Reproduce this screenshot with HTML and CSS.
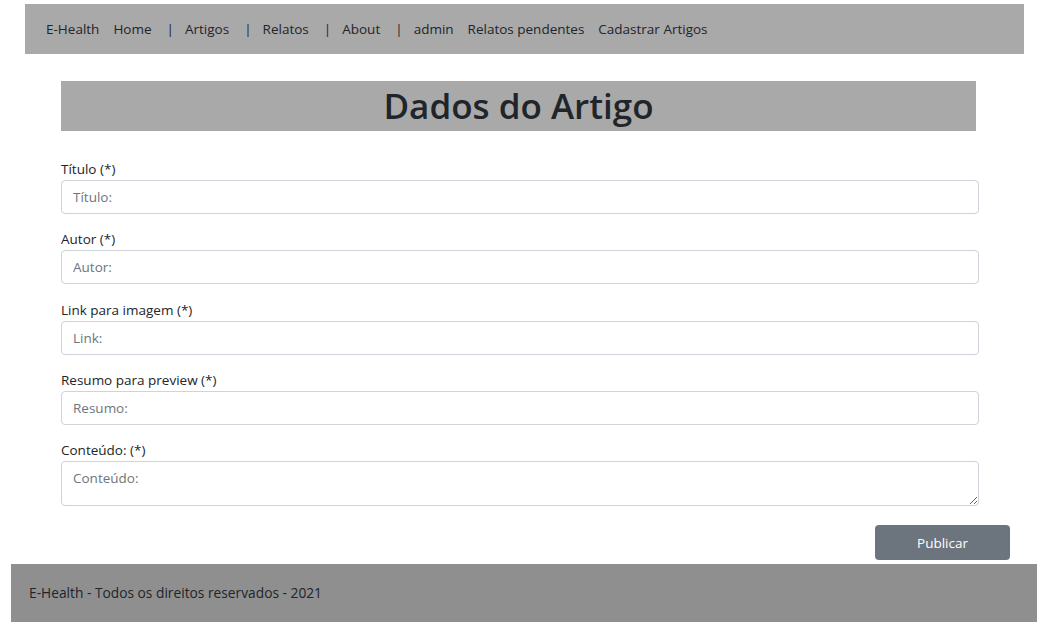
FILE: index.html
```html
<!DOCTYPE html>
<html lang="pt-BR">
<head>
<meta charset="utf-8">
<title>E-Health - Cadastrar Artigo</title>
<link rel="stylesheet" href="styles.css">
</head>
<body>
<header class="top">
  <nav class="nav">
    <a class="brand" href="#">E-Health</a>
    <a class="link" href="#">Home</a><span class="sep">|</span>
    <a class="link" href="#">Artigos</a><span class="sep">|</span>
    <a class="link" href="#">Relatos</a><span class="sep">|</span>
    <a class="link" href="#">About</a><span class="sep">|</span>
    <a class="link" href="#">admin</a>
    <a class="link" href="#">Relatos pendentes</a>
    <a class="link" href="#">Cadastrar Artigos</a>
  </nav>
</header>
<main class="main">
  <h1 class="title">Dados do Artigo</h1>
  <form class="form">
    <div class="group">
      <label class="label">Título (*)</label>
      <input class="control" type="text" placeholder="Título:">
    </div>
    <div class="group">
      <label class="label">Autor (*)</label>
      <input class="control" type="text" placeholder="Autor:">
    </div>
    <div class="group">
      <label class="label">Link para imagem (*)</label>
      <input class="control" type="text" placeholder="Link:">
    </div>
    <div class="group">
      <label class="label">Resumo para preview (*)</label>
      <input class="control" type="text" placeholder="Resumo:">
    </div>
    <div class="group">
      <label class="label">Conteúdo: (*)</label>
      <textarea class="control area" placeholder="Conteúdo:"></textarea>
    </div>
    <div class="actions">
      <button class="btn" type="button">Publicar</button>
    </div>
  </form>
</main>
<footer class="footer">
  <span>E-Health - Todos os direitos reservados - 2021</span>
</footer>
</body>
</html>
```
FILE: styles.css
```css
* { box-sizing: border-box; }
html, body { margin: 0; padding: 0; }
body {
  font-family: "Open Sans", "Noto Sans", "Liberation Sans", sans-serif;
  font-size: 13.5px;
  line-height: 1.5;
  color: #212529;
  background: #fff;
}
.top { padding: 4px 19px 0 25px; }
.nav {
  height: 50px;
  background: #a9a9a9;
  display: flex;
  align-items: center;
  padding-left: 21px;
}
.nav a { color: #212529; text-decoration: none; }
.brand { margin-right: 14px; }
.link { margin-right: 14px; }
.sep { margin-right: 11px; margin-left: 1px; color: #212529; }
.main { padding: 27px 64px 0 61px; }
.title {
  margin: 0 3px 0 0;
  height: 50px;
  background: #a9a9a9;
  text-align: center;
  font-size: 35px;
  font-weight: 600;
  line-height: 50px;
  color: #212529;
}
.form { padding-top: 28px; }
.group { display: flex; flex-direction: column; margin-bottom: 15.25px; }
.label { line-height: 21px; }
.control {
  font-family: inherit;
  font-size: 13.5px;
  color: #495057;
  height: 34px;
  padding: 6px 11px;
  border: 1px solid #ced4da;
  border-radius: 4px;
  background: #fff;
  outline: none;
}
.control::placeholder { color: #6c757d; }
.area { height: 45px; resize: vertical; padding-top: 7px; }
.actions { display: flex; justify-content: flex-end; margin-right: -31px; padding-top: 3.75px; padding-bottom: 4px; }
.btn {
  font-family: inherit;
  font-size: 13.5px;
  width: 135px;
  height: 35px;
  background: #6c757d;
  color: #fff;
  border: none;
  border-radius: 4px;
}
.footer {
  margin: 0 6px 5px 11px;
  height: 58px;
  background: #8f8f8f;
  display: flex;
  align-items: center;
  padding-left: 18px;
  color: #212529;
  font-size: 13.75px;
}
```
